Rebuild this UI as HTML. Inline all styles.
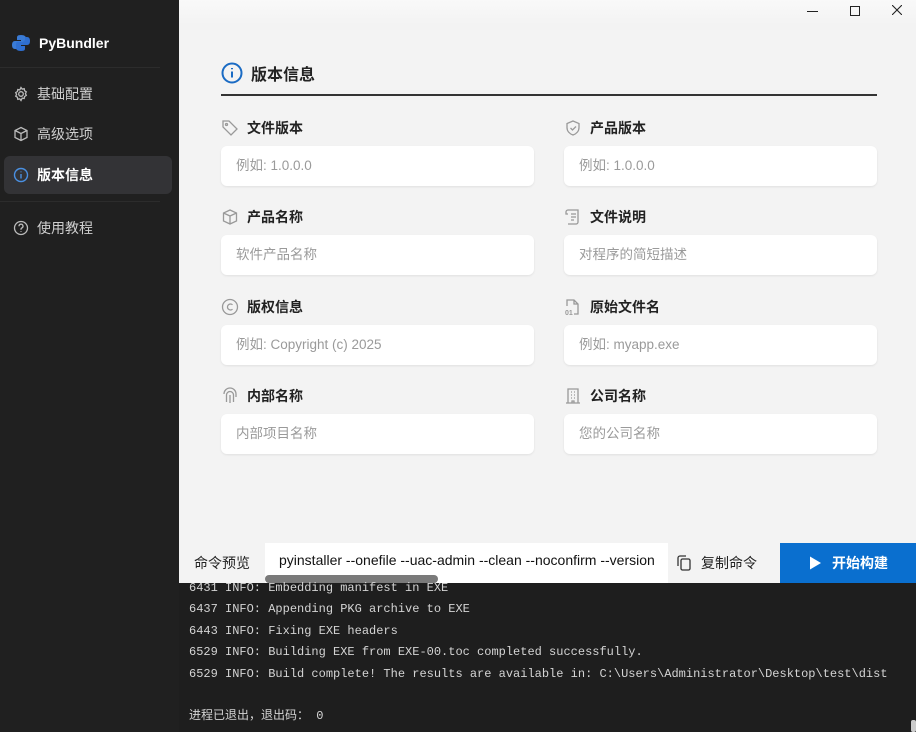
<!DOCTYPE html>
<html><head><meta charset="utf-8"><style>
*{margin:0;padding:0;box-sizing:border-box}
body{width:916px;height:732px;overflow:hidden;background:#f3f3f3;font-family:"Liberation Sans","Noto Sans CJK SC",sans-serif;position:relative}
.side{position:absolute;left:0;top:0;width:179px;height:732px;background:#202020;color:#cfcfcf}
.logo{position:absolute;left:11px;top:33px;display:flex;align-items:center;gap:8px;color:#fff;font-weight:bold;font-size:14px}
.sep{position:absolute;left:0;width:160px;height:1px;background:#2c2c2c}
.nav{position:absolute;left:4px;width:168px;height:38px;display:flex;align-items:center;padding-left:9px;gap:8px;font-size:14px;color:#cfcfcf;border-radius:6px}
.nav.act{background:#333336;color:#fff;font-weight:bold}
.main{position:absolute;left:179px;top:0;width:737px;height:543px}
.h{position:absolute;left:221px;top:61px;display:flex;align-items:center;gap:8px;font-size:16px;font-weight:bold;color:#222}
.hl{position:absolute;left:221px;top:94px;width:656px;height:1.5px;background:#333}
.lbl{position:absolute;display:flex;align-items:center;gap:8px;font-size:14px;font-weight:bold;color:#222}
.inp{position:absolute;width:313px;height:40px;background:#fff;border-radius:6px;box-shadow:0 1px 2px rgba(0,0,0,.08);font-size:13.5px;color:#9a9a9a;padding-left:15px;line-height:40px}
.cmd{position:absolute;top:543px;left:179px;width:737px;height:40px;background:#f3f3f3}
.log{position:absolute;top:583px;left:179px;width:737px;height:149px;background:#1e1e1e;color:#d4d4d4;font-family:"Liberation Mono","Noto Sans CJK SC",monospace;font-size:12px;padding-left:10px}
.log div{height:21.4px;line-height:21.4px}
</style></head><body>
<div class="side">
 <div class="logo"><svg width="20" height="20" viewBox="0 0 20 20"><path d="M10 2c-4 0-4 1.5-4 3v2h4v1H4c-2 0-3 1.5-3 4s1 4 3 4h2v-2c0-2 1.5-3 3-3h4c1.5 0 2-.8 2-2V5c0-1.5-1.5-3-5-3z" fill="#3a7bd5"/><path d="M10 18c4 0 4-1.5 4-3v-2h-4v-1h6c2 0 3-1.5 3-4s-1-4-3-4h-2v2c0 2-1.5 3-3 3H7c-1.5 0-2 .8-2 2v4c0 1.5 1.5 3 5 3z" fill="#2f6fd0"/></svg>PyBundler</div>
 <div class="sep" style="top:67px"></div>
 <div class="nav" style="top:75px"><svg width="16" height="16" viewBox="0 0 16 16" fill="none" stroke="#bbb" stroke-width="1.3"><circle cx="8" cy="8" r="2.3"/><path d="M8 1.5l1.2 1.6 2-.4.4 2 1.7 1.1-.9 1.8.9 1.8-1.7 1.1-.4 2-2-.4L8 14.5l-1.2-1.6-2 .4-.4-2L2.7 10.2l.9-1.8-.9-1.8 1.7-1.1.4-2 2 .4z"/></svg>基础配置</div>
 <div class="nav" style="top:115px"><svg width="16" height="16" viewBox="0 0 16 16" fill="none" stroke="#bbb" stroke-width="1.3"><path d="M8 1.5l6 3v7l-6 3-6-3v-7z M2 4.5l6 3 6-3 M8 7.5v7"/></svg>高级选项</div>
 <div class="nav act" style="top:156px"><svg width="16" height="16" viewBox="0 0 16 16" fill="none" stroke="#4a90e2" stroke-width="1.4"><circle cx="8" cy="8" r="6.5"/><path d="M8 7v4.5M8 4.5v.8"/></svg>版本信息</div>
 <div class="sep" style="top:201px"></div>
 <div class="nav" style="top:209px"><svg width="16" height="16" viewBox="0 0 16 16" fill="none" stroke="#bbb" stroke-width="1.3"><circle cx="8" cy="8" r="6.5"/><path d="M6 6.2a2 2 0 1 1 2.8 1.8c-.6.3-.8.7-.8 1.3v.4M8 11.3v.7"/></svg>使用教程</div>
</div>
<div class="main" style="background:linear-gradient(#f9f9f9,#f3f3f3 25px)"></div>
<div style="position:absolute;left:807px;top:11px;width:11px;height:1px;background:#222"></div>
<div style="position:absolute;left:850px;top:6px;width:10px;height:10px;border:1px solid #222"></div>
<svg style="position:absolute;left:892px;top:5px" width="10" height="10" viewBox="0 0 10 10" stroke="#222" stroke-width="1.1"><path d="M0 0L10 10M10 0L0 10"/></svg>
<div class="h"><svg width="22" height="22" viewBox="0 0 22 22" fill="none" stroke="#1a6bc4" stroke-width="2"><circle cx="11" cy="11" r="9.5"/><path d="M11 9.5v6M11 6v1.2"/></svg>版本信息</div>
<div class="hl"></div>

<div class="lbl" style="left:221px;top:118px"><svg width="18" height="18" viewBox="0 0 18 18" fill="none" stroke="#999" stroke-width="1.3"><path d="M2 2h6l8 8-6 6-8-8z"/><circle cx="5.5" cy="5.5" r="1"/></svg>文件版本</div>
<div class="inp" style="left:221px;top:146px">例如: 1.0.0.0</div>
<div class="lbl" style="left:564px;top:118px"><svg width="18" height="18" viewBox="0 0 18 18" fill="none" stroke="#999" stroke-width="1.3"><path d="M9 2l6 2.5v4c0 4-3 6.5-6 7.5-3-1-6-3.5-6-7.5v-4z M6.5 9l2 2 3.5-3.5"/></svg>产品版本</div>
<div class="inp" style="left:564px;top:146px">例如: 1.0.0.0</div>

<div class="lbl" style="left:221px;top:207px"><svg width="18" height="18" viewBox="0 0 18 18" fill="none" stroke="#999" stroke-width="1.3"><path d="M9 2l6.5 3v8L9 16l-6.5-3V5z M2.5 5L9 8l6.5-3 M9 8v8"/></svg>产品名称</div>
<div class="inp" style="left:221px;top:235px">软件产品名称</div>
<div class="lbl" style="left:564px;top:207px"><svg width="18" height="18" viewBox="0 0 18 18" fill="none" stroke="#999" stroke-width="1.3"><path d="M4 2h10v12a2 2 0 0 1-2 2H4 M4 2a2 2 0 0 0-2 2v2h2 M7 6h5M7 9h5M7 12h3"/></svg>文件说明</div>
<div class="inp" style="left:564px;top:235px">对程序的简短描述</div>

<div class="lbl" style="left:221px;top:297px"><svg width="18" height="18" viewBox="0 0 18 18" fill="none" stroke="#999" stroke-width="1.3"><circle cx="9" cy="9" r="7.5"/><path d="M11.5 6.8a3 3 0 1 0 0 4.4"/></svg>版权信息</div>
<div class="inp" style="left:221px;top:325px">例如: Copyright (c) 2025</div>
<div class="lbl" style="left:564px;top:297px"><svg width="18" height="18" viewBox="0 0 18 18" fill="none" stroke="#999" stroke-width="1.3"><path d="M3 8V2h7l4 4v10h-4 M10 2v4h4"/><text x="1" y="17" font-size="7" fill="#999" stroke="none" font-family="Liberation Sans">01</text></svg>原始文件名</div>
<div class="inp" style="left:564px;top:325px">例如: myapp.exe</div>

<div class="lbl" style="left:221px;top:386px"><svg width="18" height="18" viewBox="0 0 18 18" fill="none" stroke="#999" stroke-width="1.3"><path d="M3 7a6 6 0 0 1 12 0v3 M5.5 15V8a3.5 3.5 0 0 1 7 0v7 M9 8v8"/></svg>内部名称</div>
<div class="inp" style="left:221px;top:414px">内部项目名称</div>
<div class="lbl" style="left:564px;top:386px"><svg width="18" height="18" viewBox="0 0 18 18" fill="none" stroke="#999" stroke-width="1.3"><path d="M4 16V2h10v14 M2 16h14 M7 5h1M10 5h1M7 8h1M10 8h1M7 11h1M10 11h1M8 16v-2h2v2"/></svg>公司名称</div>
<div class="inp" style="left:564px;top:414px">您的公司名称</div>

<div class="cmd">
 <div style="position:absolute;left:0;top:0;width:86px;height:40px;line-height:40px;text-align:center;font-size:14px;color:#222">命令预览</div>
 <div style="position:absolute;left:86px;top:0;width:403px;height:40px;background:#fff;overflow:hidden;white-space:nowrap;font-size:14px;color:#111;line-height:34px;padding-left:14px">pyinstaller --onefile --uac-admin --clean --noconfirm --version</div>
 <div style="position:absolute;left:86px;top:32px;width:173px;height:8px;background:#7a7a7a;border-radius:4px"></div>
 <div style="position:absolute;left:496px;top:0;height:40px;display:flex;align-items:center;gap:8px;font-size:14px;color:#222"><svg width="18" height="18" viewBox="0 0 18 18" fill="none" stroke="#333" stroke-width="1.3"><rect x="6" y="5" width="9" height="11" rx="1.5"/><path d="M3 12V4a2 2 0 0 1 2-2h6"/></svg>复制命令</div>
 <div style="position:absolute;left:601px;top:0;width:136px;height:40px;background:#0a6fcf;color:#fff;font-weight:bold;font-size:14px;display:flex;align-items:center;justify-content:center;gap:10px"><svg width="14" height="16" viewBox="0 0 14 16"><path d="M2 1.5L13 8 2 14.5z" fill="#fff"/></svg>开始构建</div>
</div>
<div class="log">
 <div style="margin-top:-5px">6431 INFO: Embedding manifest in EXE</div>
 <div>6437 INFO: Appending PKG archive to EXE</div>
 <div>6443 INFO: Fixing EXE headers</div>
 <div>6529 INFO: Building EXE from EXE-00.toc completed successfully.</div>
 <div>6529 INFO: Build complete! The results are available in: C:\Users\Administrator\Desktop\test\dist</div>
 <div></div>
 <div>进程已退出，退出码： 0</div>
</div>
<div style="position:absolute;left:911px;top:720px;width:5px;height:12px;background:#ccc;border-radius:2px"></div>
</body></html>
